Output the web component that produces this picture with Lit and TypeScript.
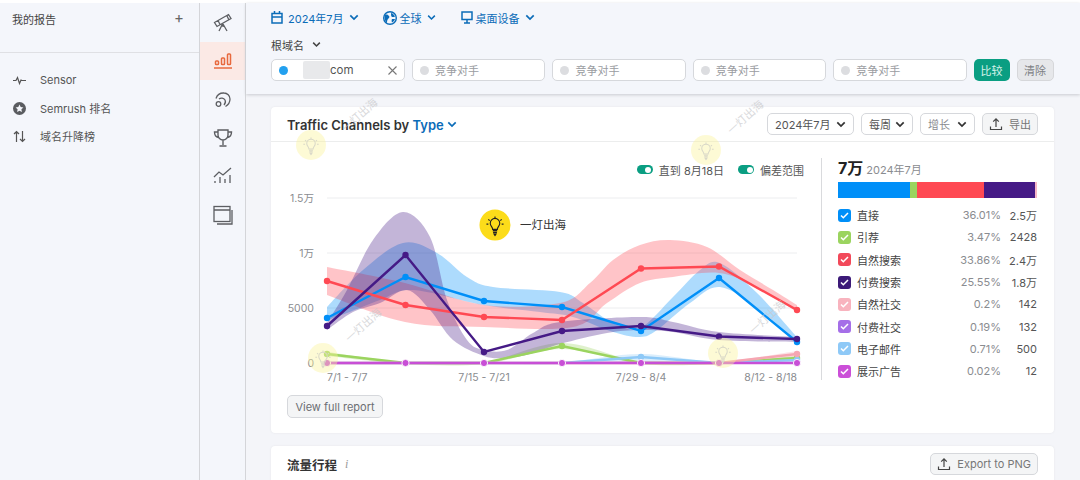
import { LitElement, html, css, svg } from "lit";
import { customElement } from "lit/decorators.js";

const XS = [327, 405.5, 484, 562, 641, 719, 797];
type Pt = [number, number];
const pts = (ys: number[]): Pt[] => ys.map((y, i) => [XS[i], y]);

function smooth(p: Pt[], move = true): string {
  let d = move ? `M${p[0][0]} ${p[0][1]}` : `L${p[0][0]} ${p[0][1]}`;
  for (let i = 0; i < p.length - 1; i++) {
    const p0 = p[Math.max(i - 1, 0)], p1 = p[i], p2 = p[i + 1], p3 = p[Math.min(i + 2, p.length - 1)];
    const k = 6;
    d += `C${p1[0] + (p2[0] - p0[0]) / k} ${p1[1] + (p2[1] - p0[1]) / k} ${p2[0] - (p3[0] - p1[0]) / k} ${p2[1] - (p3[1] - p1[1]) / k} ${p2[0]} ${p2[1]}`;
  }
  return d;
}
const band = (top: Pt[], bot: Pt[]) => smooth(top) + smooth([...bot].reverse(), false) + "Z";
const line = (ys: number[]) => pts(ys).map((p, i) => `${i ? "L" : "M"}${p[0]} ${p[1]}`).join("");

interface Series { c: string; ys: number[]; top: Pt[]; bot: Pt[]; ring?: boolean }

const SERIES: Series[] = [
  { c: "#9bd45f", ys: [354, 363, 363, 346, 363, 363, 358],
    top: pts([352, 362, 362, 343, 362, 362, 356]), bot: pts([356, 364, 364, 349, 364, 364, 360]) },
  { c: "#8ec9f7", ys: [363, 363, 363, 363, 357, 363, 360],
    top: pts([362, 362, 362, 362, 354, 362, 357]), bot: pts([364, 364, 364, 364, 362, 364, 363]) },
  { c: "#f6a6b2", ys: [363, 363, 363, 363, 363, 363, 354],
    top: pts([362, 362, 362, 362, 362, 362, 351]), bot: pts([364, 364, 364, 364, 364, 364, 357]) },
  { c: "#008ff8", ys: [318, 277, 301, 307, 331, 278, 342],
    top: [[327, 307], [363, 270], [403, 243], [437, 253], [467, 277], [493, 287], [560, 292], [583, 303], [613, 323], [640, 328], [673, 297], [700, 270], [720, 263], [757, 293], [797, 337]],
    bot: [[327, 320], [347, 313], [380, 300], [413, 290], [483, 305], [540, 312], [573, 317], [613, 332], [640, 337], [657, 330], [690, 303], [720, 287], [760, 310], [797, 343]] },
  { c: "#ff4953", ys: [281, 305, 317, 320, 268.5, 266.5, 310],
    top: [[327, 267], [405, 283], [484, 305], [560, 303], [590, 283], [613, 260], [640, 245], [670, 240], [707, 247], [740, 270], [773, 290], [797, 305]],
    bot: [[327, 295], [405, 322], [484, 327], [573, 327], [607, 303], [640, 283], [673, 277], [719, 273], [757, 287], [797, 312]] },
  { c: "#451a86", ys: [326, 255, 352, 331, 326, 336.5, 339],
    top: [[327, 323], [347, 290], [373, 240], [403, 212], [430, 237], [447, 300], [467, 340], [484, 350], [507, 350], [533, 333], [560, 322], [640, 317], [673, 322], [719, 332], [797, 337]],
    bot: [[327, 330], [353, 312], [380, 303], [407, 290], [430, 310], [453, 340], [484, 356], [505, 358], [530, 354], [560, 344], [607, 333], [640, 330], [673, 332], [719, 340], [797, 342]] },
  { c: "#c84fd6", ys: [363, 363, 363, 363, 363, 363, 363], ring: true,
    top: pts([362, 362, 362, 362, 361, 362, 362]), bot: pts([364, 364, 364, 364, 364, 364, 364]) },
];

const LEGEND = [
  ["#008ff8", "直接", "36.01%", "2.5万"],
  ["#9bd45f", "引荐", "3.47%", "2428"],
  ["#f2495a", "自然搜索", "33.86%", "2.4万"],
  ["#3c1a78", "付费搜索", "25.55%", "1.8万"],
  ["#f8b3be", "自然社交", "0.2%", "142"],
  ["#a56fe8", "付费社交", "0.19%", "132"],
  ["#8ec9f7", "电子邮件", "0.71%", "500"],
  ["#cb4fd8", "展示广告", "0.02%", "12"],
];

const chev = (w = 10) => html`<svg class="chev" width=${w} height="7" viewBox="0 0 10 7"><path d="M1.3 1.4 5 5.1l3.7-3.7" fill="none" stroke="currentColor" stroke-width="1.7"/></svg>`;
const upload = html`<svg width="14" height="14" viewBox="0 0 14 14" fill="none" stroke="#444" stroke-width="1.2"><path d="M7 10V2M4.2 4.6 7 1.8l2.8 2.8M1.5 9.5v3h11v-3"/></svg>`;

const bulb = (cx: number, cy: number, s: number, col: string) => svg`
  <g transform="translate(${cx} ${cy}) scale(${s})" fill="none" stroke=${col} stroke-width="1.2">
    <path d="M-2.5 3.5C-2.5 1-5 .2-5-3a5 5 0 0 1 10 0C5 .2 2.500 1 2.500 3.500Z"/>
    <path d="M-2.300 5H2.300M-2 7H2" stroke-width="1.400"/>
    <path d="M-1 8.500H1L0 10Z" fill=${col}/>
    <path d="M0-10v2M-7-7l1.400 1.400M7-7 5.600-5.600M-9-2h2M9-2H7"/>
  </g>`;

@customElement("app-root")
export class AppRoot extends LitElement {
  static styles = css`
    :host { display: block; width: 1080px; height: 480px; overflow: hidden; position: relative; background: #fff;
      font-family: Inter, "Noto Sans CJK SC", sans-serif; color: #333; font-size: 11px; }
    * { box-sizing: border-box; }
    .page { display: flex; height: 477px; margin-top: 3px; background: #f4f5f9; }
    .side { width: 200px; flex: none; background: #f4f6fb; border-right: 1px solid #d4d5d9; color: #555; }
    .side-head { height: 50px; padding: 8px 15px 0 12px; display: flex; justify-content: space-between; border-bottom: 1px solid #dfe0e4; color: #444; }
    .plus { font-size: 15px; line-height: 14px; color: #666; }
    .side-list { padding-top: 13px; }
    .side-row { height: 28px; display: flex; align-items: center; gap: 14px; padding-left: 13px; }
    .side-row svg { flex: none; }
    .rail { width: 46px; flex: none; background: #f4f6fb; border-right: 1px solid #d4d5d9; display: flex; flex-direction: column; }
    .rail-i { height: 38.4px; display: flex; align-items: center; justify-content: center; }
    .rail-i.first { height: 39px; }
    .rail-i.on { background: #fbe9e5; }
    .main { flex: 1; min-width: 0; }
    .head { height: 91px; background: #f4f6fb; box-shadow: 0 1px 3px #c9cbd0; padding: 7px 26px 0 25px; }
    .filters { display: flex; height: 15px; align-items: center; color: #0b6cb8; }
    .fil { display: flex; align-items: center; gap: 5px; margin-right: 25px; }
    .fil.date { margin-right: 24px; }
    .fil.tight svg:first-child { margin-right: -2px; }
    .root { display: flex; align-items: center; gap: 8px; margin-top: 12px; height: 15px; color: #444; }
    .inputs { display: flex; gap: 7px; margin-top: 7px; height: 22px; }
    .inp { width: 133.4px; height: 22px; background: #fff; border: 1px solid #d6d8dc; border-radius: 5px; display: flex; align-items: center; padding-left: 7px; gap: 6px; color: #9a9ca1; white-space: nowrap; }
    .inp .dot { width: 9px; height: 9px; border-radius: 50%; background: #dcdde0; flex: none; }
    .inp.first { width: 134px; color: #555; font-size: 11.5px; }
    .inp.first .dot { background: #22a0ef; }
    .blur { width: 27px; height: 18px; background: #e8e9eb; margin-left: 9px; margin-right: -6px; border-radius: 2px; }
    .x { margin-left: auto; margin-right: 7px; }
    .btn-go { width: 36px; height: 22px; background: #0a9e82; border-radius: 5px; color: #d5f3ea; display: flex; align-items: center; justify-content: center; }
    .btn-clr { width: 37px; height: 22px; background: #e6e7ea; border: 1px solid #d6d7da; border-radius: 5px; color: #7d7f84; display: flex; align-items: center; justify-content: center; }
    .content { padding: 13px 26px 0 25px; }
    .card { background: #fff; border-radius: 4px; box-shadow: 0 0 2px #e2e3e7; }
    .card-head { height: 35px; padding: 1px 16px 0; display: flex; align-items: center; border-bottom: 1px solid #eceded; }
    .title { font-size: 13px; font-weight: 600; color: #333; white-space: nowrap; }
    .title b { color: #0b6cb8; font-weight: 600; }
    .tchev { color: #0b6cb8; margin-left: 3px; display: flex; }
    .ctrls { margin-left: auto; margin-top: -1px; display: flex; gap: 7px; }
    .sel { height: 22px; background: #fff; border: 1px solid #d6d8dc; border-radius: 5px; display: flex; align-items: center; justify-content: space-between; padding: 0 7px; color: #555; white-space: nowrap; }
    .sel.w1 { width: 87px; } .sel.w2 { width: 52px; } .sel.w3 { width: 55px; color: #8a8c90; }
    .sel .chev { color: #333; }
    .ghost { height: 22px; background: #f4f5f6; border: 1px solid #d6d8dc; border-radius: 5px; display: flex; align-items: center; gap: 6px; padding: 0 6px; color: #777; white-space: nowrap; }
    .ghost.w4 { width: 56px; }
    .body { display: flex; height: 291px; }
    .left { width: 550px; flex: none; padding-left: 16px; }
    .toggles { display: flex; justify-content: flex-end; gap: 14px; padding-right: 17px; margin-top: 21px; height: 13px; align-items: center; color: #555; }
    .tg { display: flex; align-items: center; gap: 6px; }
    .sw { width: 16px; height: 9px; border-radius: 5px; background: #0a9e82; display: flex; justify-content: flex-end; align-items: center; padding-right: 1.5px; }
    .sw i { width: 6px; height: 6px; border-radius: 50%; background: #fff; display: block; }
    .chart { display: block; margin-top: 9px; }
    .chart text { font-family: Inter, "Noto Sans CJK SC", sans-serif; font-size: 10.5px; fill: #8a8c90; }
    .full { width: 96px; height: 23px; margin-top: 10px; background: #f4f5f6; border: 1px solid #d6d8dc; border-radius: 5px; color: #6c6e73; display: flex; align-items: center; justify-content: center; }
    .right { flex: 1; margin-top: 16px; height: 222px; border-left: 1px solid #d9dadd; padding: 0 17px 0 16px; }
    .total { display: flex; align-items: baseline; gap: 3px; height: 24px; color: #8a8c90; }
    .total strong { font-size: 16px; font-weight: 700; color: #222; line-height: 20px; }
    .bar { display: flex; height: 16px; }
    .bar i { display: block; height: 100%; }
    .rows { margin-top: 6px; }
    .lr { height: 22.3px; display: flex; align-items: center; }
    .ck { width: 13px; height: 13px; border-radius: 3px; display: flex; align-items: center; justify-content: center; flex: none; margin-right: 6px; }
    .nm { color: #444; flex: 1; }
    .pc { color: #8a8c90; }
    .vl { width: 36px; text-align: right; color: #555; }
    .card2 { margin-top: 13px; height: 60px; padding: 7px 16px 0; display: flex; justify-content: space-between; }
    .t2 { font-size: 12.5px; font-weight: 600; display: flex; align-items: center; height: 22px; gap: 8px; color: #333; }
    .t2 em { font-family: "Liberation Serif", serif; font-weight: 400; color: #999; font-size: 12px; }
    .overlay { position: absolute; left: 0; top: 0; pointer-events: none; }
    .overlay text { font-family: Inter, "Noto Sans CJK SC", sans-serif; font-size: 11px; }
    .overlay .wm { fill: #c9cacd; opacity: .7; }
    .overlay .brand { fill: #333; font-size: 11.5px; }
  `;

  render() {
    return html`
      <div class="page">
        <aside class="side">
          <div class="side-head"><span>我的报告</span><span class="plus">+</span></div>
          <div class="side-list">
            <div class="side-row"><svg width="13" height="13" viewBox="0 0 13 13" fill="none" stroke="#555" stroke-width="1.2"><path d="M0 6.5h3l1.5-3 2 6 1.5-3.500 1 .5h4"/></svg>Sensor</div>
            <div class="side-row"><svg width="13" height="13" viewBox="0 0 13 13"><circle cx="6.5" cy="6.5" r="6.5" fill="#5a5c60"/><path d="m6.5 2.6 1.2 2.5 2.7.3-2 1.900.5 2.700-2.400-1.300-2.400 1.300.5-2.700-2-1.900 2.700-.3z" fill="#f4f6fb"/></svg>Semrush 排名</div>
            <div class="side-row"><svg width="13" height="13" viewBox="0 0 13 13" fill="none" stroke="#555" stroke-width="1.2"><path d="M3.5 12V1.500M1 4l2.500-2.500L6 4M9.500 1v10.500M7 9l2.500 2.500L12 9"/></svg>域名升降榜</div>
          </div>
        </aside>
        <nav class="rail">
          <div class="rail-i first"><svg width="20" height="20" viewBox="0 0 20 20" fill="none" stroke="#5c5e62" stroke-width="1.3"><path d="m1.500 9.500 14-8 2.500 4-14 8zM5 7.500l2 4M14 3l2 4M9.500 11l-3.500 7M10 11l4 7M10 11v3"/></svg></div>
          <div class="rail-i on"><svg width="20" height="18" viewBox="0 0 20 18" fill="none" stroke="#e8693d" stroke-width="1.5"><rect x="2.500" y="9" width="3" height="3.500" rx=".8"/><rect x="8.500" y="6" width="3" height="6.500" rx=".8"/><rect x="14.500" y="2" width="3" height="10.500" rx=".8"/><path d="M1 16h18"/></svg></div>
          <div class="rail-i"><svg width="18" height="18" viewBox="0 0 18 18" fill="none" stroke="#5c5e62" stroke-width="1.3"><circle cx="4.500" cy="13" r="2.300"/><path d="M2 7.500A8 8 0 0 1 10 2a6 6 0 0 1 6 6c0 3.500-2 6-4.500 7.500M5 8a4 4 0 0 1 6 1c.8 1.500.3 3.500-1 5"/></svg></div>
          <div class="rail-i"><svg width="20" height="20" viewBox="0 0 20 20" fill="none" stroke="#5c5e62" stroke-width="1.400"><path d="M5 2h10v5a5 5 0 0 1-10 0zM5 4H1.500c0 3 1 5 4 5.500M15 4h3.500c0 3-1 5-4 5.500M10 12v5M6.500 18h7"/></svg></div>
          <div class="rail-i"><svg width="20" height="18" viewBox="0 0 20 18" fill="none" stroke="#5c5e62" stroke-width="1.3"><path d="m1 10 5-5 4 3 8-7M2 16v-2M7 16v-6M12 16v-4M17 16V8"/></svg></div>
          <div class="rail-i"><svg width="20" height="20" viewBox="0 0 20 20" fill="none" stroke="#5c5e62" stroke-width="1.3"><rect x="1" y="1.500" width="16" height="15"/><path d="M1 5h16M19 5v14H4"/></svg></div>
        </nav>
        <main class="main">
          <header class="head">
            <div class="filters">
              <div class="fil date"><svg width="12" height="13" viewBox="0 0 12 13" fill="none" stroke="#0b6cb8" stroke-width="1.5"><rect x="1" y="2.500" width="10" height="9.500"/><path d="M3.500 0v3M8.500 0v3M1 6h10"/></svg>2024年7月 ${chev()}</div>
              <div class="fil tight"><svg width="14" height="14" viewBox="0 0 14 14"><circle cx="7" cy="7" r="6.300" fill="none" stroke="#0b6cb8" stroke-width="1.400"/><path d="M2 4c2-1 3 0 4 1s0 2-1 3-1 3-1 4C2 11 1 6 2 4zM8 2c2 .5 3.500 2 4 3.500-1 .5-3 1-3.500 0S8 3 8 2zM9 8h3c-.5 2-2 3-3 3.500-.5-1-.5-2.500 0-3.500z" fill="#0b6cb8"/></svg>全球 ${chev(9)}</div>
              <div class="fil tight"><svg width="12" height="13" viewBox="0 0 12 13" fill="none" stroke="#0b6cb8" stroke-width="1.500"><rect x="1" y="1" width="10" height="7.500"/><path d="M6 9v2.500M3 12h6"/></svg>桌面设备 ${chev()}</div>
            </div>
            <div class="root">根域名 ${chev(9)}</div>
            <div class="inputs">
              <div class="inp first"><span class="dot"></span><span class="blur"></span><span>com</span><svg class="x" width="9" height="9" viewBox="0 0 9 9" stroke="#777" stroke-width="1.100"><path d="m.5.500 8 8M8.500.500l-8 8"/></svg></div>
              <div class="inp"><span class="dot"></span>竞争对手</div>
              <div class="inp"><span class="dot"></span>竞争对手</div>
              <div class="inp"><span class="dot"></span>竞争对手</div>
              <div class="inp"><span class="dot"></span>竞争对手</div>
              <div class="btn-go">比较</div>
              <div class="btn-clr">清除</div>
            </div>
          </header>
          <div class="content">
            <section class="card">
              <div class="card-head">
                <span class="title">Traffic Channels by <b>Type</b></span><span class="tchev">${chev()}</span>
                <div class="ctrls">
                  <div class="sel w1">2024年7月 ${chev()}</div>
                  <div class="sel w2">每周 ${chev()}</div>
                  <div class="sel w3">增长 ${chev()}</div>
                  <div class="ghost w4">${upload}导出</div>
                </div>
              </div>
              <div class="body">
                <div class="left">
                  <div class="toggles">
                    <div class="tg"><span class="sw"><i></i></span>直到 8月18日</div>
                    <div class="tg"><span class="sw"><i></i></span>偏差范围</div>
                  </div>
                  ${this.chart()}
                  <div class="full">View full report</div>
                </div>
                <div class="right">
                  <div class="total"><strong>7万</strong>2024年7月</div>
                  <div class="bar">
                    <i style="width:72px;background:#008ff8"></i><i style="width:7px;background:#9bd45f"></i><i style="width:67px;background:#ff4953"></i><i style="width:51px;background:#451a86"></i><i style="width:2px;background:#f6b6c6"></i>
                  </div>
                  <div class="rows">
                    ${LEGEND.map(([c, n, p, v]) => html`<div class="lr">
                      <span class="ck" style="background:${c}"><svg width="9" height="7" viewBox="0 0 9 7" fill="none" stroke="#fff" stroke-width="1.500"><path d="m1 3.500 2.300 2.300L8 1"/></svg></span>
                      <span class="nm">${n}</span><span class="pc">${p}</span><span class="vl">${v}</span></div>`)}
                  </div>
                </div>
              </div>
            </section>
            <section class="card card2">
              <div class="t2">流量行程 <em>i</em></div>
              <div class="ghost">${upload}Export to PNG</div>
            </section>
          </div>
        </main>
      </div>
      ${this.overlay()}
    `;
  }

  chart() {
    return html`<svg class="chart" width="534" height="200" viewBox="287 185 534 200">
      ${[198, 253, 308, 363].map((y) => svg`<path d="M327 ${y}H797" stroke=${y === 363 ? "#e6e6e8" : "#ecedef"} stroke-width="1"/>`)}
      ${[["1.5万", 198], ["1万", 253], ["5000", 308], ["0", 363]].map(([t, y]) => svg`<text x="314" y=${Number(y) + 4} text-anchor="end">${t}</text>`)}
      <text x="327" y="381">7/1 - 7/7</text>
      <text x="484" y="381" text-anchor="middle">7/15 - 7/21</text>
      <text x="641" y="381" text-anchor="middle">7/29 - 8/4</text>
      <text x="797" y="381" text-anchor="end">8/12 - 8/18</text>
      ${SERIES.map((s) => svg`<path d=${band(s.top, s.bot)} fill=${s.c} opacity=".32"/>`)}
      ${SERIES.map((s) => svg`<path d=${line(s.ys)} fill="none" stroke=${s.c} stroke-width="2.4"/>
        ${pts(s.ys).map((p) => svg`<circle cx=${p[0]} cy=${p[1]} r=${s.ring ? 3.6 : 3.2} fill=${s.c} stroke=${s.ring ? "#fff" : "none"} stroke-width=${s.ring ? 0.9 : 0}/>`)}`)}
    </svg>`;
  }

  overlay() {
    const glows: Pt[] = [[311, 145], [706, 150], [323, 358], [723, 353]];
    const marks: Pt[] = [[362, 118], [748, 120], [366, 328], [770, 320]];
    return html`<svg class="overlay" width="1080" height="480">
      ${glows.map(([x, y]) => svg`<circle cx=${x} cy=${y} r="15" fill="#fbf29a" opacity=".42"/>${bulb(x, y + 1, 0.85, "#d9d8c8")}`)}
      ${marks.map(([x, y]) => svg`<text class="wm" transform="translate(${x} ${y}) rotate(-42)" text-anchor="middle">一灯出海</text>`)}
      <circle cx="495" cy="225" r="15.500" fill="#fcdc1a"/>
      ${bulb(495, 226, 0.95, "#222")}
      <text class="brand" x="520" y="229">一灯出海</text>
    </svg>`;
  }
}
